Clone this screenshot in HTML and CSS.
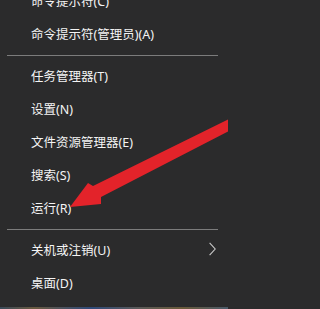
FILE: index.html
```html
<!DOCTYPE html>
<html lang="zh-CN">
<head>
<meta charset="utf-8">
<title>菜单</title>
<link rel="stylesheet" href="styles.css">
</head>
<body>
<div class="menu">
  <ul class="list">
    <li class="item">命令提示符(C)</li>
    <li class="item">命令提示符(管理员)(A)</li>
    <li class="sep"></li>
    <li class="item">任务管理器(T)</li>
    <li class="item">设置(N)</li>
    <li class="item">文件资源管理器(E)</li>
    <li class="item">搜索(S)</li>
    <li class="item">运行(R)</li>
    <li class="sep"></li>
    <li class="item has-sub">关机或注销(U)
      <svg class="chev" width="7" height="14" viewBox="0 0 7 14"><path d="M0.6 0.8 L6.2 7 L0.6 13.2" fill="none" stroke="#c9c9c9" stroke-width="1.1"/></svg>
    </li>
    <li class="item">桌面(D)</li>
  </ul>
  <svg class="arrow" width="228" height="309" viewBox="0 0 228 309">
    <polygon points="229,119 229,131 101,197 101,204 70,207 88,183 93,186" fill="#e3232a"/>
  </svg>
</div>
<div class="taskbar"></div>
</body>
</html>
```
FILE: styles.css
```css
html, body {
  margin: 0;
  padding: 0;
  background: #2b2b2c;
}
body {
  width: 228px;
  height: 309px;
  overflow: hidden;
  font-family: "Noto Sans", "Noto Sans CJK SC", sans-serif;
  font-size: 12.5px;
  color: #f4f4f4;
}
.menu {
  position: relative;
  height: 307px;
  overflow: hidden;
}
.list {
  list-style: none;
  margin: -15px 0 0 0;
  padding: 0;
}
.item {
  height: 33px;
  line-height: 33px;
  padding: 0 12px 0 31px;
  white-space: nowrap;
}
.has-sub {
  display: flex;
  align-items: center;
  justify-content: space-between;
}
.chev {
  display: block;
  margin-top: -3px;
}
.sep {
  height: 1px;
  margin: 4px 10px 4px 7px;
  background: #7c7c7c;
}
.arrow {
  position: absolute;
  left: 0;
  top: 0;
}
.taskbar {
  height: 2px;
  background: linear-gradient(90deg, #3a4a5a 0%, #6a5a40 15%, #2f4a7a 40%, #5a5a5a 60%, #6a5a3a 80%, #4a5a6a 100%);
}
```
